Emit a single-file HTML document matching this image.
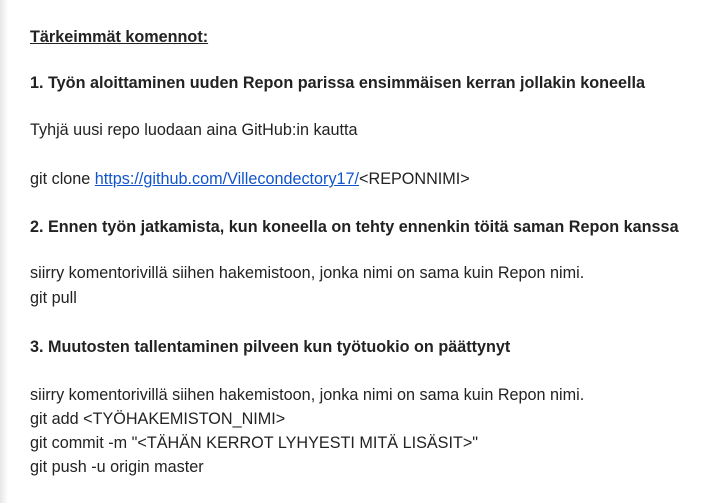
<!DOCTYPE html>
<html><head><meta charset="utf-8"><style>
html,body{margin:0;padding:0;background:#fff;width:715px;height:503px;overflow:hidden;position:relative}
body{font-family:"Liberation Sans",Arial,sans-serif;font-size:16.2px;color:#222}
.l{position:absolute;left:30px;white-space:nowrap;line-height:20px}
b{font-weight:bold}
a{color:#1155cc;text-decoration:underline}
.sh{position:absolute;left:0;top:0;width:8px;height:503px;background:linear-gradient(to right,#e6e6e6,#fff)}
</style></head><body>
<div class="sh"></div>
<div class="l" style="top:27px"><b><u>Tärkeimmät komennot:</u></b></div>
<div class="l" style="top:73px"><b>1. Työn aloittaminen uuden Repon parissa ensimmäisen kerran jollakin koneella</b></div>
<div class="l" style="top:120px">Tyhjä uusi repo luodaan aina GitHub:in kautta</div>
<div class="l" style="top:169px">git clone <a>https://github.com/Villecondectory17/</a>&lt;REPONNIMI&gt;</div>
<div class="l" style="top:217px"><b>2. Ennen työn jatkamista, kun koneella on tehty ennenkin töitä saman Repon kanssa</b></div>
<div class="l" style="top:263px">siirry komentorivillä siihen hakemistoon, jonka nimi on sama kuin Repon nimi.</div>
<div class="l" style="top:288px">git pull</div>
<div class="l" style="top:337px"><b>3. Muutosten tallentaminen pilveen kun työtuokio on päättynyt</b></div>
<div class="l" style="top:385px">siirry komentorivillä siihen hakemistoon, jonka nimi on sama kuin Repon nimi.</div>
<div class="l" style="top:409px">git add &lt;TYÖHAKEMISTON_NIMI&gt;</div>
<div class="l" style="top:433px">git commit -m "&lt;TÄHÄN KERROT LYHYESTI MITÄ LISÄSIT&gt;"</div>
<div class="l" style="top:457px">git push -u origin master</div>
</body></html>
